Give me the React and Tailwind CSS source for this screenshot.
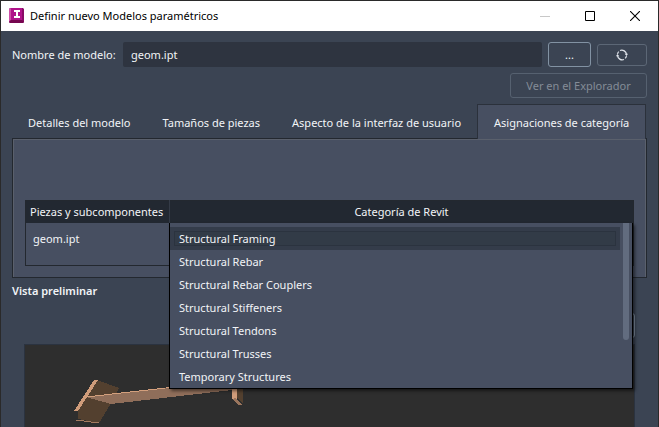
import { useState } from 'react'

const tabs = [
  'Detalles del modelo',
  'Tamaños de piezas',
  'Aspecto de la interfaz de usuario',
  'Asignaciones de categoría',
]

const categories = [
  'Structural Framing',
  'Structural Rebar',
  'Structural Rebar Couplers',
  'Structural Stiffeners',
  'Structural Tendons',
  'Structural Trusses',
  'Temporary Structures',
]

function AppIcon() {
  return (
    <svg width="16" height="16" viewBox="0 0 16 16" className="shrink-0" aria-hidden="true">
      <path d="M1 0h13l1 1v13l-1 1H1l-1-1V1z" fill="#8a0a66" />
      <path d="M0 1l2-1v12l-2 2z" fill="#cf4fa8" />
      <path d="M2 0h11v12H2z" fill="#b0128a" />
      <path d="M0 14l2-2h11l2 2-1 1H1z" fill="#75064f" />
      <path d="M5 2h6v2H9v4h2v2H5V8h2V4H5z" fill="#ffffff" />
    </svg>
  )
}

function TitleBar() {
  return (
    <header className="flex h-[30px] shrink-0 items-center bg-white pl-2 text-black">
      <AppIcon />
      <h1 className="ml-[5px] flex-1">Definir nuevo Modelos paramétricos</h1>
      <button type="button" aria-label="Minimizar" disabled className="flex h-full w-[45px] items-center justify-center">
        <svg width="10" height="10" viewBox="0 0 10 10"><path d="M0 5.500h10" stroke="#c8c8c8" /></svg>
      </button>
      <button type="button" aria-label="Maximizar" className="flex h-full w-[45px] items-center justify-center">
        <svg width="10" height="10" viewBox="0 0 10 10"><path d="M.5.500h9v9h-9z" fill="none" stroke="#000" /></svg>
      </button>
      <button type="button" aria-label="Cerrar" className="flex h-full w-[46px] items-center justify-center">
        <svg width="10" height="10" viewBox="0 0 10 10"><path d="M0 0l10 10M10 0L0 10" fill="none" stroke="#000" strokeWidth="1.100" /></svg>
      </button>
    </header>
  )
}

function RefreshIcon() {
  return (
    <svg width="12" height="12" viewBox="0 0 12 12" fill="none" stroke="#dfe3ea" strokeWidth="1.300" aria-hidden="true">
      <path d="M4 1.500A4.800 4.800 0 0 1 10.500 5.500" />
      <path d="M8 10.500A4.800 4.800 0 0 1 1.500 6.500" />
      <path d="M1.500 4.800A4.800 4.800 0 0 1 2.800 2.600M10.500 7.200A4.800 4.800 0 0 1 9.200 9.400" />
      <path d="M8.700 4.800H12L10.600 7zM0 7.200h3.300L1.400 5z" fill="#dfe3ea" stroke="none" />
    </svg>
  )
}

function ModelForm() {
  return (
    <form className="flex flex-col gap-[6px]">
      <div className="flex items-center">
        <label htmlFor="model" className="w-[111px] shrink-0">Nombre de modelo:</label>
        <input
          id="model"
          defaultValue="geom.ipt"
          className="h-[25px] min-w-0 flex-1 rounded-[2px] bg-[#2e3440] px-2 outline-none"
        />
        <button type="button" className="ml-[6px] h-[25px] w-[43px] rounded-[3px] border border-[#8292a3]">...</button>
        <button type="button" aria-label="Actualizar" className="ml-[6px] flex h-[22px] w-[50px] items-center justify-center rounded-[3px] border border-[#5c6776]">
          <RefreshIcon />
        </button>
      </div>
      <button type="button" disabled className="h-[25px] w-[137px] self-end rounded-[3px] border border-[#566170] text-[#848c97]">
        Ver en el Explorador
      </button>
    </form>
  )
}

function CategoryList({ value, onChange }) {
  return (
    <div className="absolute top-[23px] right-px left-[144px] z-10 flex h-[166px] border border-t-0 border-black bg-[#474f61] shadow-[2px_2px_3px_rgba(0,0,0,0.5)]">
      <select
        size={7}
        aria-label="Categoría de Revit"
        value={value}
        onChange={function (e) { onChange(e.target.value) }}
        className="mt-1 h-[161px] min-w-0 flex-1 appearance-none overflow-hidden bg-transparent outline-none"
      >
        {categories.map(function (name) {
          return (
            <option
              key={name}
              value={name}
              className="flex h-[23px] min-h-0 items-center px-[9px] py-0 text-[#f2f4f7] checked:bg-[linear-gradient(#323b47,#323b47)] checked:shadow-[inset_0_0_0_4px_#343c4a,inset_0_0_0_5px_#2b333f]"
            >
              {name}
            </option>
          )
        })}
      </select>
      <div className="mr-[3px] ml-[3px] h-[117px] w-[6px] rounded-b-full bg-[#626c7f]"></div>
    </div>
  )
}

function CategoryPanel() {
  let [category, setCategory] = useState('Structural Framing')

  return (
    <section className="-mt-px border border-[#23282f] bg-[#474f61] px-3 pt-[61px] pb-[11px] shadow-[inset_1px_1px_0_#5a606c,inset_-1px_0_0_#5a606c]">
      <div className="relative">
        <table className="w-full table-fixed border-collapse border border-[#23282f]">
          <thead>
            <tr className="h-[22px] bg-[#222831]">
              <th className="w-[144px] border-r border-[#343b47] px-1 text-left font-normal whitespace-nowrap">Piezas y subcomponentes</th>
              <th className="font-normal">Categoría de Revit</th>
            </tr>
          </thead>
          <tbody>
            <tr className="h-[43px]">
              <td className="px-[7px] pt-2 align-top">geom.ipt</td>
              <td></td>
            </tr>
          </tbody>
        </table>
        <CategoryList value={category} onChange={setCategory} />
      </div>
    </section>
  )
}

// steel beam with an end plate on each side
function BeamDrawing() {
  return (
    <svg width="170" height="46" viewBox="0 0 170 46" className="ml-[49px]" shapeRendering="crispEdges" aria-hidden="true">
      <path d="M23 0l22 8-9 17-11 18-21-4V27z" fill="#53402f" />
      <path d="M12 17L96 7.500 158 9v1L37 24z" fill="#8f6e5a" />
      <path d="M12 17L96 7.500" stroke="#d39f7c" fill="none" />
      <path d="M20 0h4L4 31H0z" fill="#d09c7a" />
      <path d="M2 40l23 3" stroke="#a57b60" fill="none" />
      <path d="M158 6h5v13h-5z" fill="#d09c7a" />
      <path d="M163 6h6v18l-6-6z" fill="#53402f" />
      <path d="M158 19l4-1 6 7h-3z" fill="#9a755d" />
    </svg>
  )
}

function App() {
  let [active, setActive] = useState(3)

  return (
    <div className="flex h-screen flex-col overflow-hidden border border-b-0 border-[#2a2a2a] bg-[#3b4453] font-['Noto_Sans',sans-serif] text-[11px] leading-4 text-[#f2f4f7]">
      <TitleBar />
      <main className="flex flex-1 flex-col px-[11px] pt-[11px]">
        <ModelForm />
        <div role="tablist" className="mt-[6px] flex h-[35px] pr-[3px] whitespace-nowrap">
          {tabs.map(function (tab, i) {
            return (
              <button
                key={tab}
                type="button"
                role="tab"
                aria-selected={i === active}
                onClick={function () { setActive(i) }}
                className={i === active
                  ? 'relative z-10 ml-auto border border-b-0 border-[#2b313b] bg-[#474f61] px-4 pt-px'
                  : 'px-4 pt-[3px]'}
              >
                {tab}
              </button>
            )
          })}
        </div>
        <CategoryPanel />
        <h2 className="mt-[5px] font-semibold">Vista preliminar</h2>
        <div className="mt-[14px] flex justify-end pr-3">
          <button type="button" aria-label="Actualizar vista" className="h-[25px] w-[50px] rounded-[3px] border border-[#8292a3]"></button>
        </div>
        <div className="mt-[6px] mr-3 ml-3 flex-1 border border-b-0 border-[#2b3340] bg-[#2e2e2e] pt-[35px]">
          <BeamDrawing />
        </div>
      </main>
    </div>
  )
}

export default App
